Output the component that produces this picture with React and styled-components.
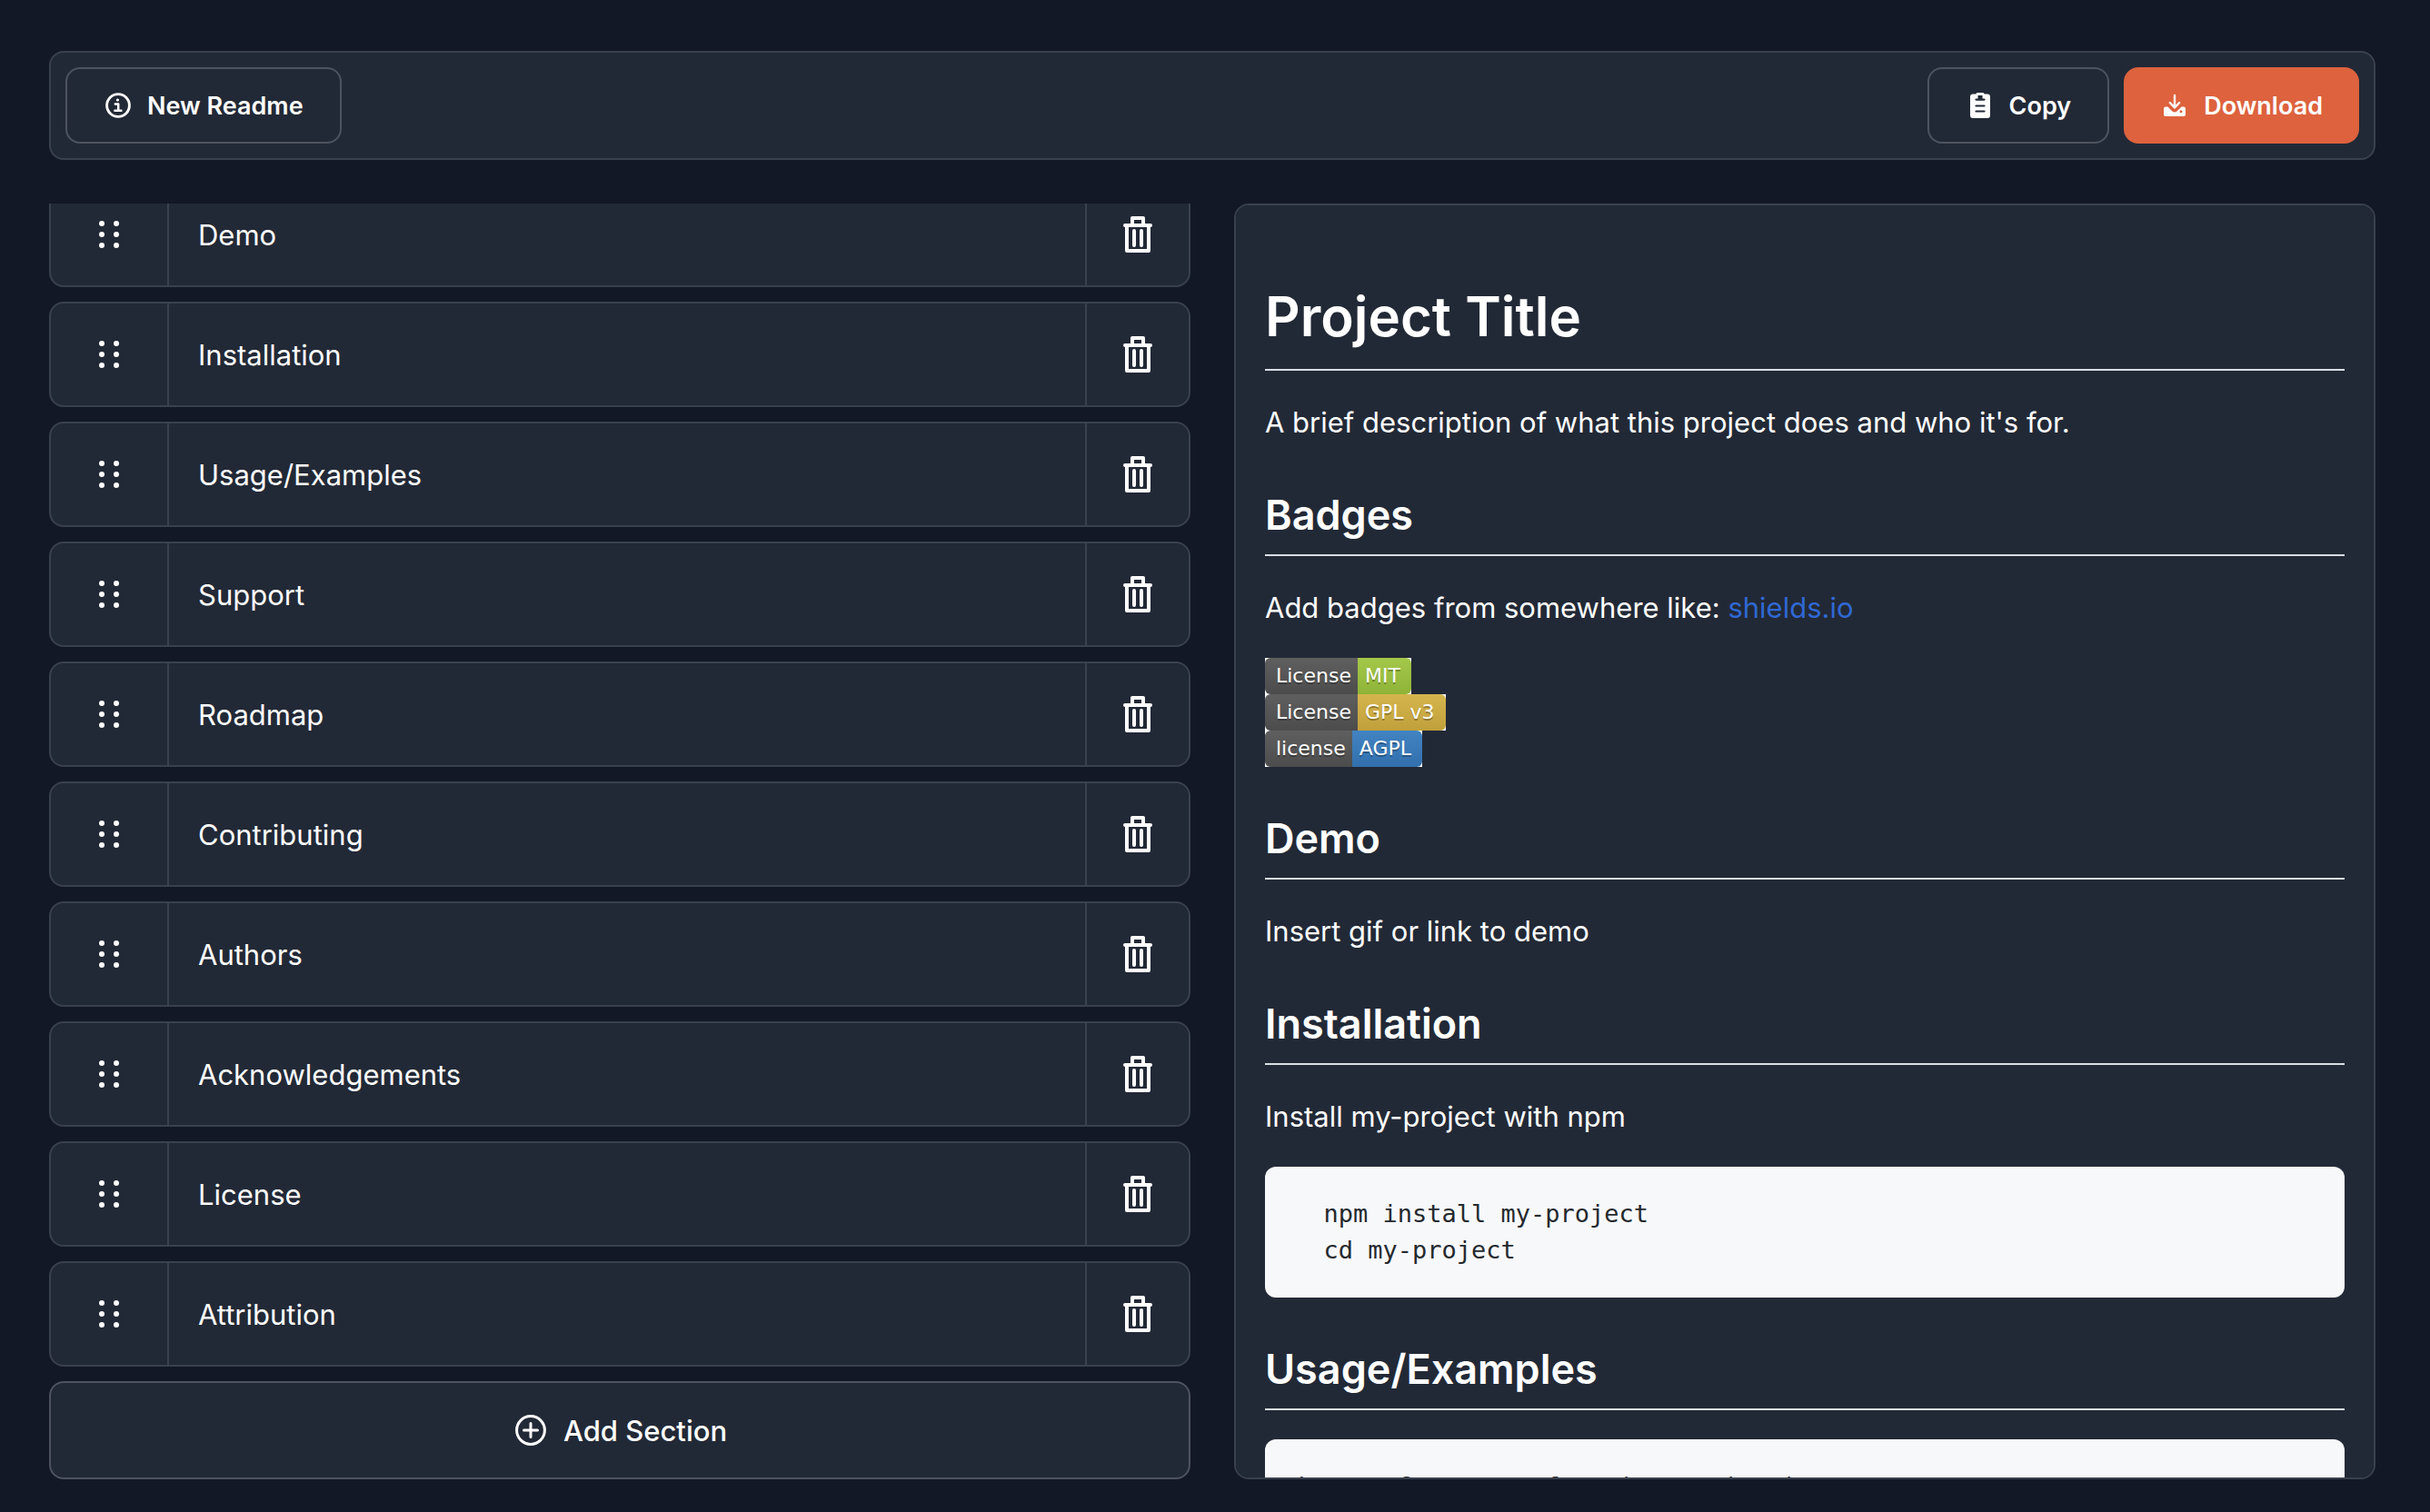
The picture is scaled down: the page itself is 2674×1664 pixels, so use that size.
import React, { useLayoutEffect, useRef } from 'react';
import styled, { createGlobalStyle } from 'styled-components';

const color = {
  page: '#121825',
  panel: '#222936',
  line: '#3a414e',
  buttonLine: '#4d5460',
  accent: '#dd623d',
  rule: '#d9dee4',
  link: '#2f68d4',
  code: '#f7f8fa',
  codeText: '#25292e',
};

const GlobalStyle = createGlobalStyle`
  *, *::before, *::after { box-sizing: border-box; }
  body {
    margin: 0;
    background: ${color.page};
    color: #fff;
    font-family: Inter, "Liberation Sans", sans-serif;
    -webkit-font-smoothing: antialiased;
  }
  button { font: inherit; color: inherit; cursor: pointer; }
`;

const Page = styled.div`
  display: flex;
  flex-direction: column;
  gap: 48px;
  height: 100vh;
  padding: 56px 60px 36px 54px;
`;

const Toolbar = styled.header`
  display: flex;
  justify-content: space-between;
  padding: 16px;
  background: ${color.panel};
  border: 2px solid ${color.line};
  border-radius: 16px;
`;

const Actions = styled.div`
  display: flex;
  gap: 16px;
`;

const Button = styled.button`
  display: flex;
  align-items: center;
  justify-content: center;
  gap: 16px;
  height: ${(p) => (p.$large ? '108px' : '84px')};
  flex: none;
  padding: 0 40px;
  font-size: ${(p) => (p.$large ? '31px' : '27px')};
  font-weight: ${(p) => (p.$large ? 500 : 600)};
  border: ${(p) => (p.$primary ? '0' : `2px solid ${color.buttonLine}`)};
  border-radius: 16px;
  background: ${(p) => (p.$primary ? color.accent : color.panel)};
`;

const Columns = styled.main`
  display: grid;
  grid-template-columns: 1fr 1fr;
  gap: 48px;
  flex: 1;
  min-height: 0;
`;

const Sections = styled.section`
  display: flex;
  flex-direction: column;
  gap: 16px;
  min-height: 0;
  overflow-y: auto;
  scrollbar-width: none;
`;

const List = styled.ul`
  display: flex;
  flex-direction: column;
  gap: 16px;
  margin: 0;
  padding: 0;
  list-style: none;
`;

const Row = styled.li`
  display: flex;
  height: 116px;
  background: ${color.panel};
  border: 2px solid ${color.line};
  border-radius: 16px;
`;

const RowButton = styled.button`
  display: flex;
  align-items: center;
  justify-content: center;
  padding: 0;
  border: 0;
  background: none;
`;

const Handle = styled(RowButton)`
  width: 130px;
  border-right: 2px solid ${color.line};
`;

const Name = styled(RowButton)`
  flex: 1;
  justify-content: flex-start;
  padding: 0 32px;
  font-size: 31px;
`;

const Remove = styled(RowButton)`
  width: 114px;
  border-left: 2px solid ${color.line};
`;

const Preview = styled.article`
  min-height: 0;
  padding: 0 32px;
  overflow-y: auto;
  scrollbar-width: none;
  font-size: 31px;
  line-height: 50px;
  background: ${color.panel};
  border: 2px solid ${color.line};
  border-radius: 16px;
`;

const Title = styled.h1`
  margin: 80px 0 32px;
  padding-bottom: 16px;
  font-size: 60px;
  line-height: 84px;
  font-weight: 600;
  border-bottom: 2px solid ${color.rule};
`;

const Heading = styled.h2`
  margin: 46px 0 32px;
  padding-bottom: 12px;
  font-size: 45px;
  line-height: 62px;
  font-weight: 600;
  border-bottom: 2px solid ${color.rule};
`;

const Text = styled.p`
  margin: 0 0 30px;
`;

const Link = styled.a`
  color: ${color.link};
  text-decoration: none;
`;

const Badges = styled.div`
  display: flex;
  flex-direction: column;
  align-items: flex-start;
  margin-bottom: 48px;
`;

const Badge = styled.span`
  display: flex;
  background: #fff;
  color: #fff;
  font-family: "DejaVu Sans", sans-serif;
  font-size: 22px;
  line-height: 40px;
  text-shadow: 0 2px 0 rgba(1, 1, 1, 0.3);
`;

const BadgeLabel = styled.span`
  padding: 0 7px 0 12px;
  border-radius: 6px 0 0 6px;
  background: linear-gradient(#5f5f5f, #4c4c4c);
`;

const BadgeValue = styled.span`
  padding: 0 12px 0 8px;
  border-radius: 0 6px 6px 0;
  background: linear-gradient(${(p) => p.$from}, ${(p) => p.$to});
`;

const CodeBlock = styled.pre`
  margin: 0 0 48px;
  padding: 32px;
  overflow: hidden;
  border-radius: 12px;
  background: ${color.code};
  color: ${color.codeText};
  font-family: "DejaVu Sans Mono", monospace;
  font-size: 27px;
  line-height: 40px;
`;

const InfoIcon = () => (
  <svg width="32" height="32" viewBox="0 0 32 32" fill="none" stroke="#fff" aria-hidden="true">
    <circle cx="16" cy="16" r="12.4" strokeWidth="2.9" />
    <circle cx="15.4" cy="10" r="1.6" fill="#fff" stroke="none" />
    <path d="M12.8 14.6h3.4v6.9M12.4 21.8h7" strokeWidth="2.5" strokeLinecap="round" strokeLinejoin="round" />
  </svg>
);

const ClipboardIcon = () => (
  <svg width="32" height="32" viewBox="0 0 32 32" aria-hidden="true">
    <path fill="#fff" d="M8 3.5h3.4Q11.6 2 13 2h6q1.400 0 1.600 1.500H24q3 0 3 3V27q0 3-3 3H8q-3 0-3-3V6.500q0-3 3-3z" />
    <g stroke={color.panel} strokeWidth="2.200" strokeLinecap="round">
      <path d="M11.500 9.600h9M11.500 16.500h9M11.500 22.500h9" />
    </g>
    <path fill={color.panel} d="M13.500 5h5v4h-5z" />
  </svg>
);

const DownloadIcon = () => (
  <svg width="32" height="32" viewBox="0 0 32 32" fill="none" aria-hidden="true">
    <path fill="#fff" d="M6 17.500h2.500l5 5q2.500 2 5 0l5-5H26q2 0 2 2V26q0 2-2 2H6q-2 0-2-2v-6.500q0-2 2-2z" />
    <path stroke="#fff" strokeWidth="2.400" strokeLinecap="round" strokeLinejoin="round" d="M16 5v13M10.800 13l5.200 5.500 5.200-5.500" />
    <circle cx="23" cy="22.700" r="1.500" fill={color.accent} />
  </svg>
);

const AddIcon = () => (
  <svg width="40" height="40" viewBox="0 0 40 40" fill="none" stroke="#fff" strokeWidth="3" strokeLinecap="round" aria-hidden="true">
    <circle cx="20" cy="20" r="15.400" />
    <path d="M20 12.500v15M12.500 20h15" />
  </svg>
);

const GripIcon = () => (
  <svg width="24" height="32" viewBox="0 0 24 32" fill="#fff" aria-hidden="true">
    {[4, 16, 28].map((y) => (
      <g key={y}>
        <circle cx="4" cy={y} r="3" />
        <circle cx="20" cy={y} r="3" />
      </g>
    ))}
  </svg>
);

const TrashIcon = () => (
  <svg width="32" height="40" viewBox="0 0 32 40" fill="none" stroke="#fff" strokeWidth="4" strokeLinecap="round" strokeLinejoin="round" aria-hidden="true">
    <path d="M2 10h28M10 10V2h12v8M4 10v28h24V10M12 16v16M20 16v16" />
  </svg>
);

const sections = [
  'Demo',
  'Installation',
  'Usage/Examples',
  'Support',
  'Roadmap',
  'Contributing',
  'Authors',
  'Acknowledgements',
  'License',
  'Attribution',
];

const badges = [
  { label: 'License', value: 'MIT', from: '#a4c84a', to: '#8fb437' },
  { label: 'License', value: 'GPL v3', from: '#d5b54d', to: '#c0a03b' },
  { label: 'license', value: 'AGPL', from: '#4283c2', to: '#3270ad' },
];

export default function App() {
  const listRef = useRef(null);

  useLayoutEffect(() => {
    listRef.current.scrollTop = listRef.current.scrollHeight;
  }, []);

  return (
    <>
      <GlobalStyle />
      <Page>
        <Toolbar>
          <Button type="button"><InfoIcon />New Readme</Button>
          <Actions>
            <Button type="button"><ClipboardIcon />Copy</Button>
            <Button type="button" $primary><DownloadIcon />Download</Button>
          </Actions>
        </Toolbar>
        <Columns>
          <Sections ref={listRef}>
            <List>
              {sections.map((name) => (
                <Row key={name}>
                  <Handle type="button" aria-label={`Move ${name}`}><GripIcon /></Handle>
                  <Name type="button">{name}</Name>
                  <Remove type="button" aria-label={`Delete ${name}`}><TrashIcon /></Remove>
                </Row>
              ))}
            </List>
            <Button type="button" $large><AddIcon />Add Section</Button>
          </Sections>
          <Preview>
            <Title>Project Title</Title>
            <Text>A brief description of what this project does and who it's for.</Text>
            <Heading>Badges</Heading>
            <Text>Add badges from somewhere like: <Link href="https://shields.io/">shields.io</Link></Text>
            <Badges>
              {badges.map((b) => (
                <Badge key={b.value}>
                  <BadgeLabel>{b.label}</BadgeLabel>
                  <BadgeValue $from={b.from} $to={b.to}>{b.value}</BadgeValue>
                </Badge>
              ))}
            </Badges>
            <Heading>Demo</Heading>
            <Text>Insert gif or link to demo</Text>
            <Heading>Installation</Heading>
            <Text>Install my-project with npm</Text>
            <CodeBlock>{'  npm install my-project\n  cd my-project'}</CodeBlock>
            <Heading>Usage/Examples</Heading>
            <CodeBlock>{"import Component from 'my-project'"}</CodeBlock>
          </Preview>
        </Columns>
      </Page>
    </>
  );
}
